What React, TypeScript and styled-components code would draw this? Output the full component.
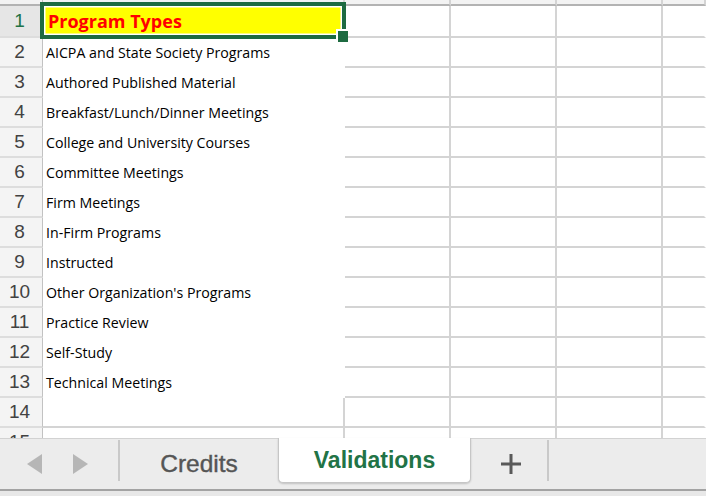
import React from 'react'
import styled, { createGlobalStyle } from 'styled-components'

const GlobalStyle = createGlobalStyle`
	html, body {
		margin: 0;
		padding: 0;
		background: #ffffff;
	}
	body {
		width: 706px;
		height: 496px;
		overflow: hidden;
		font-family: 'Liberation Sans', Arial, sans-serif;
	}
`

const GRID = '43px 302px 106px 106px 106px 1fr'
const LINE = '#d4d4d4'
const GREEN = '#1e6b41'

const Window = styled.div`
	display: flex;
	flex-direction: column;
	width: 706px;
	height: 496px;
`

const Sheet = styled.div`
	height: 438px;
	overflow: hidden;
	flex: none;
`

const Row = styled.div<{ $height: number }>`
	display: grid;
	grid-template-columns: ${GRID};
	height: ${p => p.$height}px;
`

const HeaderCell = styled.div<{ $corner?: boolean }>`
	background: #f3f3f3;
	border-bottom: 2px solid #b3b3b3;
	border-right: ${p => (p.$corner ? '1px solid #c2c2c2' : `2px solid ${LINE}`)};
`

const RowHead = styled.div<{ $active?: boolean }>`
	display: flex;
	align-items: center;
	justify-content: center;
	background: ${p => (p.$active ? '#e6e6e6' : '#f4f4f4')};
	border-right: 1px solid #c2c2c2;
	border-bottom: 2px solid #dddddd;
	color: ${p => (p.$active ? '#217346' : '#424242')};
	font-size: 19px;
	padding-right: 3px;
`

const Cell = styled.div<{ $noRight?: boolean; $noBottom?: boolean }>`
	display: flex;
	align-items: center;
	background: #ffffff;
	border-right: 2px solid ${p => (p.$noRight ? '#ffffff' : LINE)};
	border-bottom: 2px solid ${p => (p.$noBottom ? '#ffffff' : LINE)};
	padding-left: 3px;
	font-family: 'Open Sans', 'Liberation Sans', sans-serif;
	font-size: 14.2px;
	color: #000000;
	white-space: nowrap;
`

const TitleCell = styled(Cell)`
	position: relative;
	background: #ffff00;
	padding-left: 5px;
	font-weight: bold;
	font-size: 18px;
	color: #ff0000;
`

const Selection = styled.div`
	position: absolute;
	z-index: 2;
	left: -3px;
	top: -4px;
	width: 306px;
	height: 37px;
	box-sizing: border-box;
	border: 4px solid ${GREEN};
	box-shadow: inset 0 0 0 1.5px #ffffff;
	pointer-events: none;
`

const FillHandle = styled.div`
	position: absolute;
	left: 292px;
	top: 23px;
	width: 10px;
	height: 11px;
	background: ${GREEN};
	border: 2px solid #ffffff;
	border-right: none;
	border-bottom: none;
`

const TabBar = styled.div`
	display: flex;
	flex-direction: column;
	flex: 1;
`

const TabStrip = styled.div`
	display: flex;
	align-items: center;
	height: 51px;
	box-sizing: border-box;
	border-top: 1px solid #d2d2d2;
	background: #ececec;
`

const Footer = styled.div`
	flex: 1;
	border-top: 2px solid #a3a3a3;
	background: #e8e8e8;
`

const Nav = styled.div`
	display: flex;
	align-items: center;
	gap: 31px;
	width: 118px;
	padding-left: 27px;
	box-sizing: border-box;
`

const Arrow = styled.div<{ $dir: 'left' | 'right' }>`
	width: 0;
	height: 0;
	border-top: 10.5px solid transparent;
	border-bottom: 10.5px solid transparent;
	${p =>
		p.$dir === 'left'
			? 'border-right: 15px solid #b6b6b6;'
			: 'border-left: 15px solid #b6b6b6;'}
`

const Divider = styled.div`
	align-self: flex-start;
	margin-top: 1px;
	width: 2px;
	height: 41px;
	background: #c9c9c9;
`

const Tab = styled.div<{ $active?: boolean; $width: number }>`
	display: flex;
	align-items: center;
	justify-content: center;
	width: ${p => p.$width}px;
	box-sizing: border-box;
	font-size: ${p => (p.$active ? '23px' : '24.5px')};
	font-weight: ${p => (p.$active ? 'bold' : 'normal')};
	color: ${p => (p.$active ? '#217346' : '#555555')};
	${p =>
		p.$active
			? `
		align-self: flex-start;
		margin-top: -1px;
		height: 45px;
		background: #ffffff;
		border: 1px solid #c6c6c6;
		border-top: none;
		border-radius: 0 0 5px 5px;
		box-shadow: 0 1px 2px rgba(0, 0, 0, 0.18);
	`
			: 'height: 100%; -webkit-text-stroke: 0.4px #555555;'}
`

const AddButton = styled.div`
	display: flex;
	align-items: center;
	justify-content: center;
	width: 76px;
	height: 100%;
	padding-left: 3px;
	box-sizing: border-box;
`

const types = [
	'AICPA and State Society Programs',
	'Authored Published Material',
	'Breakfast/Lunch/Dinner Meetings',
	'College and University Courses',
	'Committee Meetings',
	'Firm Meetings',
	'In-Firm Programs',
	'Instructed',
	"Other Organization's Programs",
	'Practice Review',
	'Self-Study',
	'Technical Meetings',
	'',
	'',
]

const Rest = () => (
	<>
		<Cell />
		<Cell />
		<Cell />
		<Cell $noRight />
	</>
)

export default function App() {
	return (
		<Window>
			<GlobalStyle />
			<Sheet>
				<Row $height={6}>
					<HeaderCell $corner />
					<HeaderCell />
					<HeaderCell />
					<HeaderCell />
					<HeaderCell />
					<HeaderCell />
				</Row>
				<Row $height={32}>
					<RowHead $active>1</RowHead>
					<TitleCell $noRight $noBottom>
						Program Types
						<Selection>
							<FillHandle />
						</Selection>
					</TitleCell>
					<Rest />
				</Row>
				{types.map((t, i) => {
					const n = i + 2
					return (
						<Row key={n} $height={30}>
							<RowHead>{n}</RowHead>
							<Cell $noRight={n <= 13} $noBottom={n <= 13}>
								{t}
							</Cell>
							<Rest />
						</Row>
					)
				})}
			</Sheet>
			<TabBar>
				<TabStrip>
					<Nav>
						<Arrow $dir='left' />
						<Arrow $dir='right' />
					</Nav>
					<Divider />
					<Tab $width={158}>Credits</Tab>
					<Tab $active $width={193}>
						Validations
					</Tab>
					<AddButton>
						<svg width='20' height='20' viewBox='0 0 20 20'>
							<path d='M10 0v20M0 10h20' stroke='#595959' strokeWidth='3' />
						</svg>
					</AddButton>
					<Divider />
				</TabStrip>
				<Footer />
			</TabBar>
		</Window>
	)
}
